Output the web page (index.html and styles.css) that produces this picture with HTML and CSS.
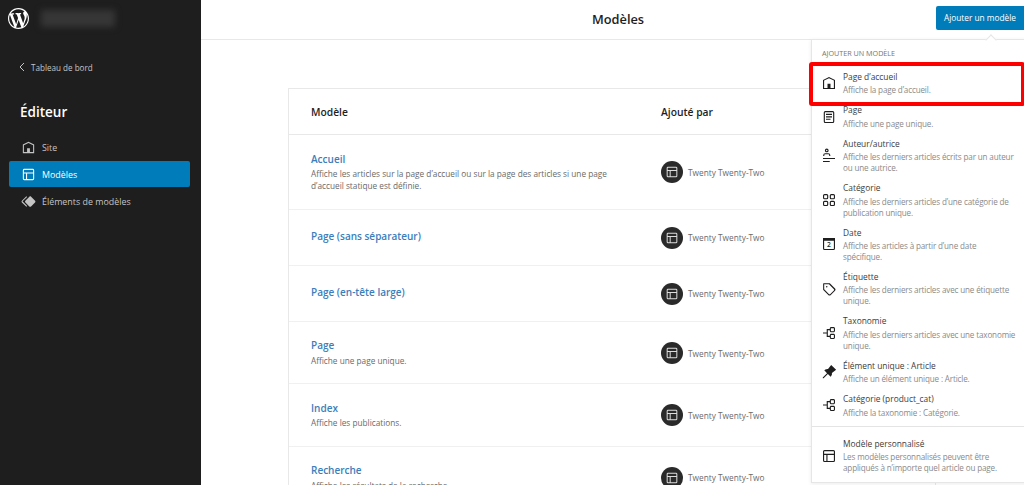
FILE: index.html
```html
<!DOCTYPE html>
<html lang="fr">
<head>
<meta charset="utf-8">
<title>Modèles</title>
<link rel="stylesheet" href="styles.css">
</head>
<body>
<svg class="defs" width="0" height="0" aria-hidden="true">
  <symbol id="i-home" viewBox="0 0 24 24"><path d="M12 4L4 7.9V20h16V7.9L12 4zm6.5 14.5H14V13h-4v5.5H5.5V8.8L12 5.7l6.5 3.1v9.7z"/></symbol>
  <symbol id="i-layout" viewBox="0 0 24 24"><path d="M18 5.5H6a.5.5 0 00-.5.5v3h13V6a.5.5 0 00-.5-.5zm.5 5H10v8h8a.5.5 0 00.5-.5v-7.5zm-10 0h-3V18a.5.5 0 00.5.5h2.5v-8zM6 4h12a2 2 0 012 2v12a2 2 0 01-2 2H6a2 2 0 01-2-2V6a2 2 0 012-2z"/></symbol>
  <symbol id="i-meta" viewBox="0 0 24 24"><path fill-rule="evenodd" d="M8.95 11.25H4v1.5h4.95v4.5H13V18c0 1.1.9 2 2 2h3c1.1 0 2-.9 2-2v-3c0-1.1-.9-2-2-2h-3c-1.1 0-2 .9-2 2v.75h-2.55v-7.5H13V9c0 1.1.9 2 2 2h3c1.1 0 2-.9 2-2V6c0-1.1-.9-2-2-2h-3c-1.1 0-2 .9-2 2v.75H8.95v4.5ZM14.5 15v3c0 .3.2.5.5.5h3c.3 0 .5-.2.5-.5v-3c0-.3-.2-.5-.5-.5h-3c-.3 0-.5.2-.5.5Zm0-6V6c0-.3.2-.5.5-.5h3c.3 0 .5.2.5.5v3c0 .3-.2.5-.5.5h-3c-.3 0-.5-.2-.5-.5Z"/></symbol>
</svg>

<aside class="sidebar">
  <div class="brand">
    <svg class="wp-logo" viewBox="0 0 20 20"><path d="M20 10c0-5.51-4.49-10-10-10C4.48 0 0 4.49 0 10c0 5.52 4.48 10 10 10 5.51 0 10-4.48 10-10zM7.78 15.37L4.37 6.22c.55-.02 1.17-.08 1.17-.08.5-.06.44-1.13-.06-1.11 0 0-1.45.11-2.37.11-.18 0-.37 0-.58-.01C4.12 2.69 6.87 1.11 10 1.11c2.33 0 4.45.87 6.05 2.34-.68-.11-1.65.39-1.65 1.58 0 .74.45 1.36.9 2.1.35.61.55 1.36.55 2.46 0 1.49-1.4 5-1.4 5l-3.03-8.37c.54-.02.82-.17.82-.17.5-.05.44-1.25-.06-1.22 0 0-1.44.12-2.38.12-.87 0-2.33-.12-2.33-.12-.5-.03-.56 1.2-.06 1.22l.92.08 1.26 3.41zM17.41 10c.24-.64.74-1.87.43-4.25.7 1.29 1.05 2.71 1.05 4.25 0 3.29-1.73 6.24-4.4 7.78.97-2.59 1.94-5.2 2.92-7.78zM6.1 18.09C3.12 16.65 1.11 13.53 1.11 10c0-1.3.23-2.48.72-3.59C3.25 10.3 4.67 14.2 6.1 18.09zm4.03-6.63l2.58 6.98c-.86.29-1.76.45-2.71.45-.79 0-1.57-.11-2.29-.33.81-2.38 1.62-4.74 2.42-7.1z"/></svg>
    <div class="site-blur"></div>
  </div>
  <a class="back"><svg class="chev" viewBox="0 0 8 12"><path d="M6 2 2 6l4 4" fill="none" stroke="currentColor" stroke-width="1"/></svg>Tableau de bord</a>
  <h2 class="side-title">Éditeur</h2>
  <nav class="side-nav">
    <a class="side-item"><svg class="side-ico"><use href="#i-home"/></svg>Site</a>
    <a class="side-item active"><svg class="side-ico"><use href="#i-layout"/></svg>Modèles</a>
    <a class="side-item"><svg class="side-ico" viewBox="0 0 24 24"><path d="M21.3 10.8l-5.6-5.6c-.7-.7-1.8-.7-2.5 0l-5.6 5.6c-.7.7-.7 1.8 0 2.5l5.6 5.6c.3.3.8.5 1.2.5s.9-.2 1.2-.5l5.6-5.6c.8-.7.8-1.9.1-2.5zm-17.6 1L10 5.5l-1-1-6.3 6.3c-.7.7-.7 1.8 0 2.5L9 19.5l1.1-1.1-6.3-6.3c-.2 0-.2-.2-.1-.3z"/></svg>Éléments de modèles</a>
  </nav>
</aside>

<main class="main">
  <header class="topbar">
    <h1 class="page-title">Modèles</h1>
    <button class="add-btn">Ajouter un modèle</button>
  </header>

  <div class="content">
    <section class="table">
      <div class="row head"><div>Modèle</div><div>Ajouté par</div></div>

      <div class="row">
        <div><a class="tpl-name">Accueil</a><p class="tpl-desc">Affiche les articles sur la page d’accueil ou sur la page des articles si une page d’accueil statique est définie.</p></div>
        <div class="author"><span class="avatar"><svg><use href="#i-layout"/></svg></span>Twenty Twenty-Two</div>
      </div>
      <div class="row">
        <div><a class="tpl-name">Page (sans séparateur)</a></div>
        <div class="author"><span class="avatar"><svg><use href="#i-layout"/></svg></span>Twenty Twenty-Two</div>
      </div>
      <div class="row">
        <div><a class="tpl-name">Page (en-tête large)</a></div>
        <div class="author"><span class="avatar"><svg><use href="#i-layout"/></svg></span>Twenty Twenty-Two</div>
      </div>
      <div class="row">
        <div><a class="tpl-name">Page</a><p class="tpl-desc">Affiche une page unique.</p></div>
        <div class="author"><span class="avatar"><svg><use href="#i-layout"/></svg></span>Twenty Twenty-Two</div>
      </div>
      <div class="row">
        <div><a class="tpl-name">Index</a><p class="tpl-desc">Affiche les publications.</p></div>
        <div class="author"><span class="avatar"><svg><use href="#i-layout"/></svg></span>Twenty Twenty-Two</div>
      </div>
      <div class="row">
        <div><a class="tpl-name">Recherche</a><p class="tpl-desc">Affiche les résultats de la recherche.</p></div>
        <div class="author"><span class="avatar"><svg><use href="#i-layout"/></svg></span>Twenty Twenty-Two</div>
      </div>
    </section>
  </div>

  <div class="menu">
    <div class="menu-label">AJOUTER UN MODÈLE</div>
    <div class="menu-group">
      <a class="menu-item"><svg class="m-ico"><use href="#i-home"/></svg><span class="m-text"><b>Page d’accueil</b><small>Affiche la page d’accueil.</small></span></a>
      <a class="menu-item"><svg class="m-ico" viewBox="0 0 24 24"><path d="M7 5.5h10a.5.5 0 01.5.5v12a.5.5 0 01-.5.5H7a.5.5 0 01-.5-.5V6a.5.5 0 01.5-.5zM17 4H7a2 2 0 00-2 2v12a2 2 0 002 2h10a2 2 0 002-2V6a2 2 0 00-2-2zm-1 3.75H8v1.5h8v-1.5zM8 11h8v1.5H8V11zm6 3.25H8v1.5h6v-1.5z"/></svg><span class="m-text"><b>Page</b><small>Affiche une page unique.</small></span></a>
      <a class="menu-item"><svg class="m-ico" viewBox="0 0 24 24"><path fill-rule="evenodd" d="M10 4.5a1 1 0 11-2 0 1 1 0 012 0zm1.5 0a2.5 2.5 0 11-5 0 2.5 2.5 0 015 0zm2.25 7.5v-1A2.75 2.75 0 0011 8.25H7A2.75 2.75 0 004.25 11v1h1.5v-1c0-.69.56-1.25 1.25-1.25h4c.69 0 1.25.56 1.25 1.25v1h1.5zM4 20h9v-1.5H4V20zm16-4H4v-1.5h16V16z"/></svg><span class="m-text"><b>Auteur/autrice</b><small>Affiche les derniers articles écrits par un auteur ou une autrice.</small></span></a>
      <a class="menu-item"><svg class="m-ico" viewBox="0 0 24 24"><path fill-rule="evenodd" d="M6 5.500h3a.5.5 0 01.5.5v3a.5.5 0 01-.5.5H6a.5.5 0 01-.5-.5V6a.5.5 0 01.5-.5zM4 6a2 2 0 012-2h3a2 2 0 012 2v3a2 2 0 01-2 2H6a2 2 0 01-2-2V6zm11-.5h3a.5.5 0 01.5.5v3a.5.5 0 01-.5.5h-3a.5.5 0 01-.5-.5V6a.5.5 0 01.5-.5zM13 6a2 2 0 012-2h3a2 2 0 012 2v3a2 2 0 01-2 2h-3a2 2 0 01-2-2V6zm5 8.500h-3a.5.5 0 00-.5.5v3a.5.5 0 00.5.5h3a.5.5 0 00.5-.5v-3a.5.5 0 00-.5-.5zM15 13a2 2 0 00-2 2v3a2 2 0 002 2h3a2 2 0 002-2v-3a2 2 0 00-2-2h-3zm-9 1.500h3a.5.5 0 01.5.5v3a.5.5 0 01-.5.5H6a.5.5 0 01-.5-.5v-3a.5.5 0 01.5-.5zM4 15a2 2 0 012-2h3a2 2 0 012 2v3a2 2 0 01-2 2H6a2 2 0 01-2-2v-3z"/></svg><span class="m-text"><b>Catégorie</b><small>Affiche les derniers articles d’une catégorie de publication unique.</small></span></a>
      <a class="menu-item"><svg class="m-ico" viewBox="0 0 24 24"><path fill-rule="evenodd" d="M4 4h16v14a2 2 0 01-2 2H6a2 2 0 01-2-2zm1.500 3.500V18c0 .3.2.5.5.5h12c.3 0 .5-.2.5-.5V7.500z"/><text x="12" y="16.500" class="cal-num">2</text></svg><span class="m-text"><b>Date</b><small>Affiche les articles à partir d’une date<br>spécifique.</small></span></a>
      <a class="menu-item"><svg class="m-ico" viewBox="0 0 24 24"><path d="M20.100 11.200l-6.700-6.700c-.1-.1-.3-.2-.5-.2H5c-.4-.1-.8.3-.8.7v7.800c0 .2.1.4.2.5l6.700 6.700c.2.2.5.4.7.5s.6.2.9.2c.3 0 .6-.1.9-.2.3-.1.5-.3.8-.5l5.600-5.600c.4-.4.7-1 .7-1.600.1-.6-.2-1.200-.7-1.600zm-1 2.100l-5.600 5.600c-.1.1-.2.2-.3.2-.2.1-.5.1-.8 0-.1 0-.2-.1-.3-.2l-6.500-6.500V5.800h6.400l6.500 6.500c.2.2.3.4.3.7 0 .3-.1.5-.2.7zM9 8c-.6 0-1 .4-1 1s.4 1 1 1 1-.4 1-1-.4-1-1-1z"/></svg><span class="m-text"><b>Étiquette</b><small>Affiche les derniers articles avec une étiquette unique.</small></span></a>
      <a class="menu-item"><svg class="m-ico"><use href="#i-meta"/></svg><span class="m-text"><b>Taxonomie</b><small>Affiche les derniers articles avec une taxonomie unique.</small></span></a>
      <a class="menu-item"><svg class="m-ico" viewBox="0 0 24 24"><path d="m21.500 9.100-6.600-6.600-4.200 5.600c-1.200-.1-2.400.1-3.600.7-.1 0-.1.1-.2.1-.5.3-.9.6-1.200.9l3.700 3.700-5.700 5.700v1.100h1.100l5.700-5.700 3.700 3.700c.4-.4.7-.8.900-1.200.1-.1.1-.2.2-.3.6-1.100.8-2.400.6-3.600l5.600-4.100z"/></svg><span class="m-text"><b>Élément unique : Article</b><small>Affiche un élément unique : Article.</small></span></a>
      <a class="menu-item"><svg class="m-ico"><use href="#i-meta"/></svg><span class="m-text"><b>Catégorie (product_cat)</b><small>Affiche la taxonomie : Catégorie.</small></span></a>
    </div>
    <div class="menu-group custom">
      <a class="menu-item"><svg class="m-ico"><use href="#i-layout"/></svg><span class="m-text"><b>Modèle personnalisé</b><small>Les modèles personnalisés peuvent être appliqués à n’importe quel article ou page.</small></span></a>
    </div>
    <div class="highlight"></div>
  </div>
</main>
</body>
</html>
```

FILE: styles.css
```css
* { box-sizing: border-box; }
html, body { height: 100%; }
body {
  margin: 0;
  display: flex;
  height: 485px;
  overflow: hidden;
  background: #fff;
  color: #1e1e1e;
  font-family: "Open Sans", "Noto Sans", "Liberation Sans", sans-serif;
}
.defs { position: absolute; }
svg { fill: currentColor; display: block; }

.sidebar { width: 201px; flex: none; background: #1e1e1e; color: #fff; }
.brand { display: flex; align-items: center; gap: 12px; padding: 8px 0 0 8px; }
.wp-logo { width: 21px; height: 21px; }
.site-blur { width: 74px; height: 17px; background: #363636; filter: blur(3px); }
.back { display: flex; align-items: center; gap: 5px; margin: 30px 0 0 18px; height: 16px; font-size: 8.100px; color: #c4c4c4; }
.chev { width: 8px; height: 12px; }
.side-title { margin: 27px 0 0 20px; height: 20px; font-size: 13.500px; line-height: 20px; font-weight: 600; }
.side-nav { margin: 12px 11px 0 9px; display: flex; flex-direction: column; gap: 1px; }
.side-item { display: flex; align-items: center; gap: 5px; height: 26px; padding-left: 11px; border-radius: 2px; font-size: 8.900px; color: #c4c4c4; }
.side-item.active { background: #007cba; color: #fff; }
.side-ico { width: 17px; height: 17px; flex: none; }

.main { position: relative; flex: 1; min-width: 0; }
.topbar { position: relative; display: flex; justify-content: center; height: 40px; border-bottom: 1px solid #e8e8e8; padding-left: 11px; }
.page-title { margin: 0; font-size: 12.800px; line-height: 39px; font-weight: 600; }
.add-btn {
  position: absolute; right: 0; top: 6px; width: 88px; height: 24px;
  border: 0; border-radius: 2px 0 0 2px; padding: 0;
  background: #007cba; color: #fff; font: 8.300px/24px "Open Sans", sans-serif;
}

.content { padding: 48px 88px 0 87px; }
.table { border: 1px solid #e8e8e8; border-bottom: 0; }
.row {
  display: grid; grid-template-columns: 350px 1fr; align-items: center;
  padding: 17px 22px 16px; border-bottom: 1px solid #f0f0f0;
}
.row.head { height: 46px; padding-top: 0; padding-bottom: 0; border-bottom-color: #e8e8e8; font-size: 10.300px; font-weight: 600; }
.tpl-name { display: block; margin: -1.500px 0 1.500px; font-size: 10px; line-height: 16px; font-weight: 600; color: #3a7ebb; }
.tpl-desc { margin: 0; width: 305px; font-size: 8.250px; line-height: 12.400px; color: #6a6a6a; }
.author { display: flex; align-items: center; gap: 5px; font-size: 8.300px; color: #6a6a6a; }
.avatar { width: 22px; height: 22px; flex: none; display: flex; align-items: center; justify-content: center; border-radius: 50%; background: #2a2a2a; color: #ddd; }
.avatar svg { width: 16px; height: 16px; }

.menu {
  position: absolute; top: 39px; left: 610px; width: 220px; height: 444px;
  background: #fff; border: 1px solid #e6e6e6; box-shadow: 0 1px 4px rgba(0,0,0,.08);
}
.menu::before {
  content: ""; position: absolute; top: -4px; left: 175px; width: 7px; height: 7px;
  background: #fff; border: 1px solid #e6e6e6; border-width: 1px 0 0 1px; transform: rotate(45deg);
}
.menu-label { padding: 7px 0 0 10px; height: 27px; font-size: 7.200px; line-height: 12px; font-weight: 500; color: #757575; }
.menu-group { padding-bottom: 3.400px; }
.menu-item { display: flex; align-items: center; gap: 5px; padding: 3px 0 5px 8px; }
.m-ico { width: 18px; height: 18px; flex: none; margin-top: 1px; }
.m-text { display: block; width: 173px; }
.m-text b { display: block; font-size: 8.400px; line-height: 14.400px; font-weight: 400; color: #3c3c3c; }
.m-text small { display: block; font-size: 8.100px; letter-spacing: -.15px; line-height: 11px; color: #8a8a8a; }
.custom { border-top: 1px solid #e4e4e4; padding-top: 7px; }
.highlight { position: absolute; left: -3px; top: 22px; width: 216px; height: 44px; border: 4px solid #f00; border-radius: 3px; }
.cal-num { font-size: 9px; font-weight: 600; text-anchor: middle; font-family: "Open Sans", sans-serif; }
```
